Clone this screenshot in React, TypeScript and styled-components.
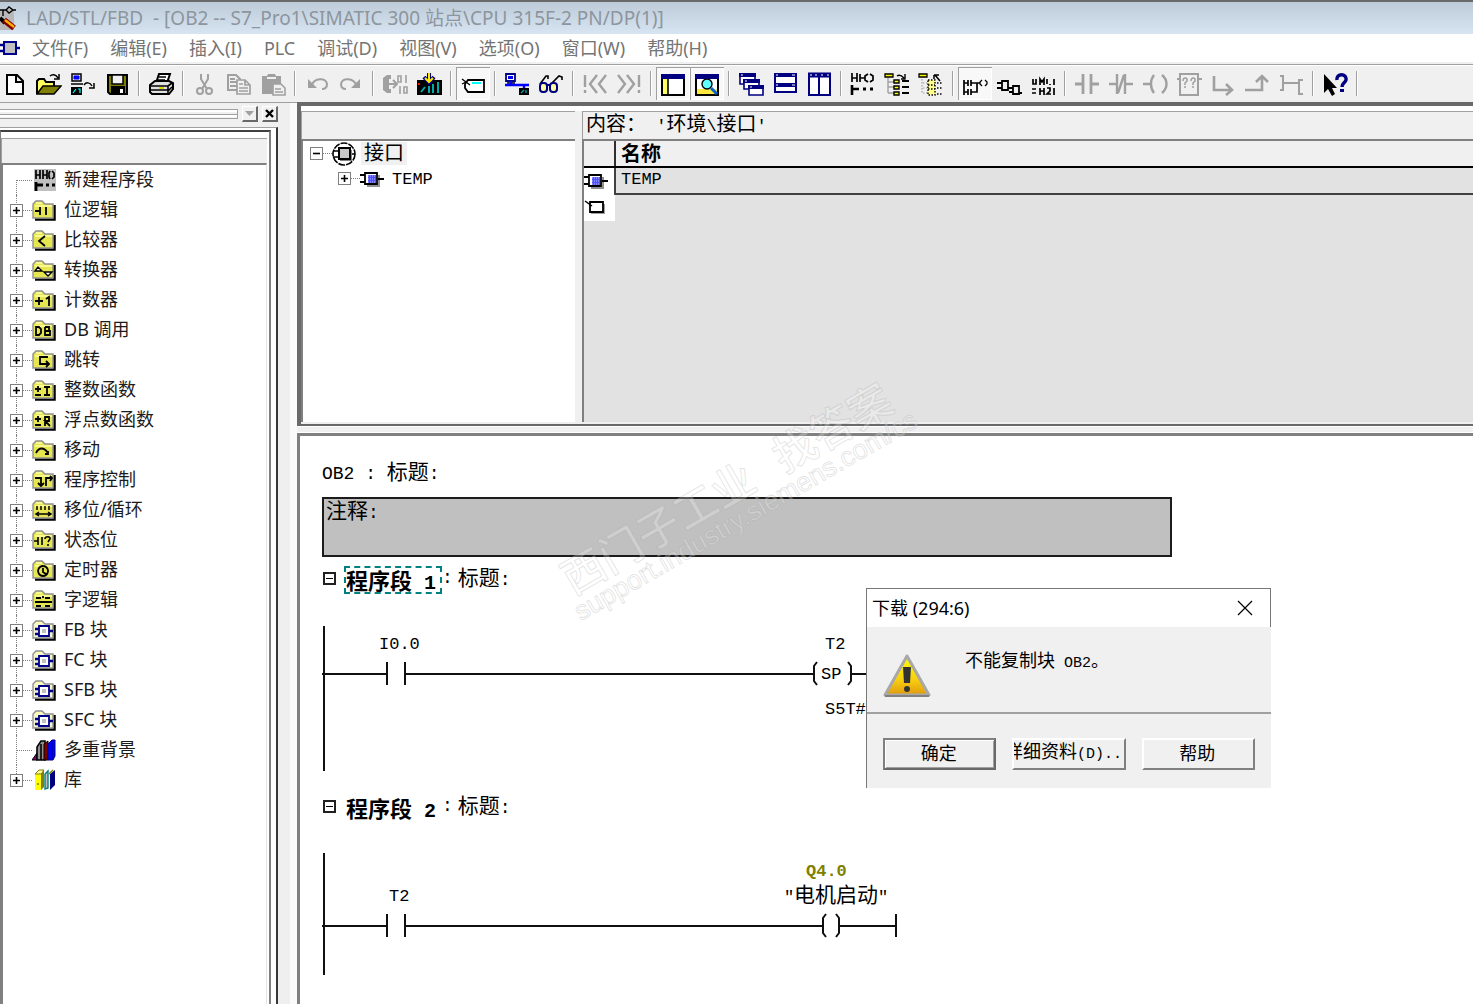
import React from "react";
import styled, { createGlobalStyle, css } from "styled-components";

const UI = '"Noto Sans", "Noto Sans CJK SC", sans-serif';
const MONO = '"Liberation Mono", "Noto Sans CJK SC", monospace';
const CJK = '"Noto Sans CJK SC", sans-serif';

const Global = createGlobalStyle`
  *, *::before, *::after { box-sizing: border-box; }
  body { margin: 0; background: #f0f0f0; color: #000; font-family: ${UI}; font-size: 18px; }
  button { font: inherit; color: inherit; border: 0; padding: 0; margin: 0; background: none; border-radius: 0; }
  svg { display: block; flex: none; }
`;

const Window = styled.div`
  display: flex;
  flex-direction: column;
  min-height: 100vh;
  position: relative;
  overflow: hidden;
`;

const TitleBar = styled.header`
  display: flex;
  align-items: center;
  gap: 10px;
  height: 34px;
  border-top: 2px solid #696969;
  background: linear-gradient(#bdcbd9, #d7e4f2);
  color: #8d959d;
  font-size: 19px;
  line-height: 28px;
  white-space: pre;
`;

const MenuBar = styled.nav`
  display: flex;
  align-items: center;
  gap: 22px;
  height: 28px;
  background: #fff;
  color: #747474;
  line-height: 28px;
`;

const MenuLead = styled.span`
  width: 20px;
  margin-right: -10px;
`;

const ToolBar = styled.div`
  display: flex;
  align-items: stretch;
  height: 38px;
  margin-top: 2px;
  padding: 2px 0;
  border-top: 1px solid #a0a0a0;
  box-shadow: inset 0 1px #fff;
  margin-left: -2px;
`;

const ToolButton = styled.button<{ $on?: boolean }>`
  display: flex;
  align-items: center;
  justify-content: center;
  flex: 0 0 34px;
  ${(p) =>
    p.$on &&
    css`
      background: #f8f8f8;
      box-shadow: inset 1px 1px #a0a0a0, inset -1px -1px #fff;
    `}
`;

const Divider = styled.span`
  flex: 0 0 10px;
  display: flex;
  justify-content: center;
  padding: 4px 0;
  &::before {
    content: "";
    width: 2px;
    background: #a0a0a0;
    border-right: 1px solid #fff;
  }
`;

const Body = styled.div`
  flex: 1;
  display: flex;
  align-items: stretch;
`;

const SideDock = styled.aside`
  flex: 0 0 278px;
  display: flex;
  flex-direction: column;
`;

const Gripper = styled.div`
  display: flex;
  align-items: center;
  gap: 4px;
  height: 25px;
  border-top: 1px solid #a0a0a0;
  padding-bottom: 2px;
`;

const GripLines = styled.span`
  flex: 1;
  height: 10px;
  margin-left: -4px;
  border: solid #a0a0a0;
  border-width: 1px 1px 1px 0;
  background: linear-gradient(#fff 2px, #f0f0f0 2px 4px, #a0a0a0 4px 5px, #fff 5px 7px, #f0f0f0 7px);
`;

const GripButton = styled.button`
  display: flex;
  align-items: center;
  justify-content: center;
  width: 16px;
  height: 16px;
  background: #f0f0f0;
  border: solid;
  border-width: 1px 2px 2px 1px;
  border-color: #fff #696969 #696969 #fff;
`;

const DockFrame = styled.div`
  flex: 1;
  display: flex;
  border-top: 1px solid #a0a0a0;
  border-right: 2px solid #383838;
  padding: 2px 5px 0 0;
  background: #fff;
`;

const DockInner = styled.div`
  flex: 1;
  display: flex;
  flex-direction: column;
  border: solid #808080;
  border-width: 2px 2px 0 1px;
  border-top-color: #404040;
  padding: 6px 2px 0 0;
`;

const DockHeader = styled.div`
  height: 25px;
  border: 1px solid #a0a0a0;
  border-width: 1px 0 0 1px;
  background: #f0f0f0;
`;

const Tree = styled.ul`
  flex: 1;
  margin: 0;
  padding: 0;
  list-style: none;
  background: #fff;
  border: solid #808080;
  border-width: 2px 0 0 2px;
`;

const SideTree = styled(Tree)`
  border-right: 1px solid #e3e3e3;
`;

const SideRow = styled.li`
  display: flex;
  align-items: center;
  height: 30px;
  color: #1c1c1c;
  line-height: 28px;
  white-space: pre;
`;

const Branch = styled.span<{ $first?: boolean; $last?: boolean }>`
  position: relative;
  flex: 0 0 29px;
  align-self: stretch;
  display: flex;
  align-items: center;
  padding-left: 7px;
  &::before {
    content: "";
    position: absolute;
    left: 13px;
    top: ${(p) => (p.$first ? 15 : 0)}px;
    bottom: ${(p) => (p.$last ? 15 : 0)}px;
    border-left: 1px dotted #808080;
  }
  &::after {
    content: "";
    position: absolute;
    left: 13px;
    right: 0;
    top: 15px;
    border-top: 1px dotted #808080;
  }
`;

const Toggle = styled.button`
  position: relative;
  z-index: 1;
  width: 13px;
  height: 13px;
  border: 1px solid #808080;
  background: #fff;
`;

const Label = styled.span`
  margin-left: 8px;
  padding-bottom: 2px;
`;

const Sash = styled.div`
  flex: 0 0 19px;
  background: linear-gradient(90deg, #efefef 12px, #fafafa 12px);
  border-top: 1px solid #a0a0a0;
`;

const Main = styled.main`
  flex: 1;
  min-width: 0;
  display: flex;
  flex-direction: column;
`;

const InterfacePane = styled.section`
  flex: 0 0 324px;
  display: flex;
  gap: 7px;
  border: solid #696969;
  border-width: 4px 0 2px 4px;
  padding-bottom: 2px;
  background: linear-gradient(#fff 5px, #f0f0f0 5px);
`;

const PaneColumn = styled.div<{ $grow?: boolean }>`
  flex: ${(p) => (p.$grow ? "1 1 0" : "0 0 274px")};
  min-width: 0;
  display: flex;
  flex-direction: column;
  padding-top: 5px;
`;

const PaneHeader = styled.div`
  height: 28px;
  border: solid #a0a0a0;
  border-width: 1px 0 0 1px;
  padding-left: 3px;
  background: #f0f0f0;
  line-height: 22px;
  white-space: pre;
`;

const PaneRow = styled.li<{ $child?: boolean }>`
  display: flex;
  align-items: center;
  height: 25px;
  padding-left: ${(p) => (p.$child ? 35 : 7)}px;
  line-height: 24px;
`;

const Dots = styled.span`
  width: 9px;
  border-top: 1px dotted #808080;
`;

const NodeText = styled.span<{ $selected?: boolean }>`
  margin-left: 5px;
  padding: 0 3px;
  height: 23px;
  line-height: 20px;
  background: ${(p) => (p.$selected ? "#f0f0f0" : "none")};
`;

const GridArea = styled.div`
  flex: 1;
  border: solid #808080;
  border-width: 2px 0 0 2px;
  background: #e2e2e2;
`;

const Grid = styled.table`
  width: 100%;
  border-collapse: collapse;
  table-layout: fixed;
  line-height: 22px;
  th, td { padding: 0 0 0 5px; height: 26px; text-align: left; }
  thead th { background: #f0f0f0; border-bottom: 2px solid #000; height: 26px; }
  thead th:first-child { width: 31px; border-right: 2px solid #303030; }
  tbody td:first-child { background: #fff; padding: 0; height: 27px; }
`;

const DataCell = styled.td`
  border-left: 2px solid #404040;
  border-bottom: 2px solid #404040;
  line-height: 18px;
  vertical-align: top;
`;

const HSash = styled.div`
  height: 7px;
  background: #f0f0f0;
  border: solid #fff;
  border-width: 1px 0;
`;

const Editor = styled.section`
  flex: 1;
  border: solid #808080;
  border-width: 3px 0 0 3px;
  background: #fff;
  padding: 22px 0 0 22px;
`;

const BlockTitle = styled.div`
  height: 28px;
  line-height: 24px;
  white-space: pre;
`;

const Comment = styled.div`
  max-width: 850px;
  height: 60px;
  margin: 11px 0 9px;
  padding: 0 2px;
  border: 2px solid #1c1c1c;
  background: #c0c0c0;
  line-height: 20px;
`;

const NetworkHead = styled.div`
  display: flex;
  align-items: center;
  height: 28px;
  line-height: 24px;
  white-space: pre;
`;

const Fold = styled.button`
  display: flex;
  align-items: center;
  justify-content: center;
  width: 13px;
  height: 13px;
  margin: 0 8px 4px 1px;
  border: 2px solid #202020;
  &::before { content: ""; width: 7px; height: 1px; background: #000; }
`;

const NetworkName = styled.strong<{ $selected?: boolean }>`
  height: 28px;
  padding-right: 4px;
  border: 2px dashed ${(p) => (p.$selected ? "#008080" : "transparent")};
  line-height: 22px;
`;

const NetworkTitle = styled.span`
  display: flex;
  gap: 5px;
  padding-bottom: 4px;
`;

const Run = styled.span<{ $size: number; $cjk?: boolean }>`
  font-family: ${(p) => (p.$cjk ? CJK : MONO)};
  font-size: ${(p) => p.$size}px;
  line-height: inherit;
`;

/* Fixed-pitch text: ideographs take a full cell, Latin characters half of one. */
const HALF: Record<number, number> = { 18: 15, 20: 17, 21: 18, 22: 20 };
function Fixed({ text, size = 20 }: { text: string; size?: 18 | 20 | 21 | 22 }) {
  const runs = text.match(/[\u3000-\u9fff\uff00-\uffef]+|[^\u3000-\u9fff\uff00-\uffef]+/g) || [];
  return (
    <span>
      {runs.map((r, i) => {
        const wide = r.charCodeAt(0) >= 0x3000;
        return (
          <Run key={i} $cjk={wide} $size={wide ? size : HALF[size]}>
            {r}
          </Run>
        );
      })}
    </span>
  );
}

const LadderText = styled.text<{ $cjk?: boolean; $bold?: boolean }>`
  font-family: ${(p) => (p.$cjk ? CJK : MONO)};
  font-size: ${(p) => (p.$cjk ? 21 : 17)}px;
  font-weight: ${(p) => (p.$bold ? 700 : 400)};
  fill: ${(p) => (p.$bold ? "#808000" : "#000")};
`;

const Watermark = styled.div`
  position: absolute;
  left: 553px;
  top: 561px;
  width: 440px;
  transform: rotate(-30deg);
  transform-origin: 0 0;
  color: rgba(255, 255, 255, 0.25);
  -webkit-text-stroke: 1px rgba(160, 160, 160, 0.28);
  white-space: pre;
  pointer-events: none;
`;

const MarkLarge = styled.div`
  font-family: ${CJK};
  font-size: 43px;
  font-weight: 500;
  line-height: 43px;
`;

const MarkSmall = styled.div`
  margin-left: -6px;
  font-family: "Liberation Sans", sans-serif;
  font-size: 27px;
  line-height: 28px;
`;

const Dialog = styled.section`
  position: absolute;
  left: 866px;
  top: 588px;
  width: 405px;
  background: #f0f0f0;
  border-left: 1px solid #777;
`;

const DialogTitle = styled.div`
  display: flex;
  align-items: center;
  justify-content: space-between;
  height: 39px;
  padding: 0 17px 0 5px;
  border: solid #777;
  border-width: 1px 1px 0 0;
  background: #fff;
  line-height: 36px;
`;

const DialogBody = styled.div`
  display: flex;
  height: 87px;
  padding: 18px 16px 0;
  gap: 34px;
  border-bottom: 2px solid #a0a0a0;
  line-height: 28px;
`;

const WarnBox = styled.span`
  padding-top: 9px;
`;

const DialogButtons = styled.div`
  display: flex;
  gap: 16px;
  padding: 24px 16px 18px;
`;

const PushButton = styled.button<{ $default?: boolean }>`
  display: flex;
  align-items: center;
  justify-content: center;
  flex: 1;
  min-width: 0;
  height: 32px;
  padding: 0 2px 4px 0;
  overflow: hidden;
  white-space: pre;
  line-height: 24px;
  border: 2px solid;
  border-color: #fff #808080 #808080 #fff;
  ${(p) =>
    p.$default &&
    css`
      border-color: #808080 #696969 #696969 #808080;
      box-shadow: inset 1px 1px #fff, inset -1px -1px #a0a0a0;
    `}
`;

/* ---------- icons ---------- */

const G = "#a0a0a0";
const N = "#000080";

function Icon({ children }: { children: React.ReactNode }) {
  return (
    <svg width="26" height="26" viewBox="0 0 26 26" fill="none" stroke="#000" strokeWidth="2" aria-hidden="true">
      {children}
    </svg>
  );
}

const icons: Record<string, React.ReactNode> = {
  new: <path d="M5 4h10l6 6v13H5zM14 4v7h7" fill="#fff" />,
  open: (
    <>
      <path d="M1 23V10l2-2h5l2 3h8v4" fill="#ffff60" />
      <path d="M1 23l6-8h18l-7 8z" fill="#808000" strokeWidth="1.5" />
      <path d="M14 5c2-2 6-2 8 2M23 3v5h-5" strokeWidth="1.5" />
    </>
  ),
  down: (
    <>
      <path d="M2 3h9v7H2z" fill="#e8e8e8" strokeWidth="1.5" />
      <path d="M4 5h5v3H4z" fill="#00f" stroke="#00f" strokeWidth="1" />
      <path d="M1 13h12" strokeWidth="1.5" />
      <path d="M1 16h11v8H1z" fill="#000" stroke="none" />
      <path d="M3 22l3-4M8 18h2v4" stroke="#0ff" strokeWidth="1.2" />
      <path d="M14 14c2-3 6-3 8 1M24 12v5h-5" strokeWidth="1.5" />
    </>
  ),
  save: (
    <>
      <path d="M4 4h19v19H6l-2-2z" fill="#808000" />
      <path d="M8 4h11v9H8z" fill="#f0f0f0" strokeWidth="1.5" />
      <path d="M8 16h12v7H8z" fill="#000" />
      <path d="M16 18h3v4h-3z" fill="#fff" stroke="none" />
    </>
  ),
  print: (
    <>
      <path d="M8 12l3-9h11l-3 9z" fill="#fff" />
      <path d="M11 6h7M10 9h7" strokeWidth="1.3" />
      <path d="M2 14l5-4h14l4 2v6l-4 5H4l-2-2z" fill="#e0e0e0" />
      <path d="M2 15h18v7M2 19h18M20 15l4-3M20 20l4-4" strokeWidth="1.6" />
      <path d="M11 17h5" stroke="#dcdc00" />
    </>
  ),
  cut: (
    <g stroke={G} strokeWidth="2">
      <path d="M9 3v5l6 10M16 3v5l-6 10" />
      <circle cx="8" cy="20" r="3" />
      <circle cx="17" cy="20" r="3" />
    </g>
  ),
  copy: (
    <g stroke={G} strokeWidth="2">
      <path d="M2 4h8l4 4v11H2zM4 8h5M4 11h7M4 15h7" />
      <path d="M11 9h8l5 5v9H11zM19 9v5h5M13 13h4M13 17h9M13 20h9" fill="#f0f0f0" strokeWidth="1.7" />
    </g>
  ),
  paste: (
    <>
      <path d="M2 5h5l1-2h7l1 2h5v18H2z" fill={G} stroke="none" />
      <path d="M7 7h9" stroke="#f0f0f0" />
      <path d="M13 13h8l4 4v7H13zM15 18h6M15 21h8" fill="#f0f0f0" stroke={G} strokeWidth="1.6" />
    </>
  ),
  undo: (
    <>
      <path d="M8 14c2-7 14-8 15-1 0 3-2 5-5 5" stroke={G} />
      <path d="M4 8v9h9z" fill={G} stroke="none" />
    </>
  ),
  redo: (
    <>
      <path d="M18 14C16 7 4 6 3 13c0 3 2 5 5 5" stroke={G} />
      <path d="M22 8v9h-9z" fill={G} stroke="none" />
    </>
  ),
  call: (
    <>
      <path d="M9 4H5L1 7v12l4 3h4v-4H7V8h2z" fill={G} stroke="none" />
      <g stroke={G}>
        <path d="M7 13h7M11 9l4 4-4 4" />
        <path d="M16 5h3v6h-3zM24 4v8M18 15v8M22 16h3v6h-3z" strokeWidth="1.6" />
      </g>
    </>
  ),
  module: (
    <>
      <path d="M1 9h25v15H1z" fill="#000" stroke="none" />
      <path d="M13 2v7M8 6l5 6 5-6" stroke={N} strokeWidth="4" />
      <path d="M13 2v8M9 7l4 4 4-4" stroke="#ffe800" />
      <path d="M3 12v2" stroke="#f00" />
      <path d="M5 21l4-5M13 15v7M17 13v9M22 11v11" stroke="#0aa" />
    </>
  ),
  tag: (
    <>
      <path d="M8 9h16v12H8l-3-4v-4z" fill="#fff" strokeWidth="1.8" />
      <path d="M2 8l8 6M2 13l4-2" strokeWidth="1.3" />
      <path d="M12 12h9" stroke="#0ff" />
    </>
  ),
  net: (
    <>
      <path d="M2 3h9v7H2z" fill="#fff" strokeWidth="1.8" stroke={N} />
      <path d="M4 5h5v3H4z" fill="#00f" stroke="none" />
      <path d="M3 12h8" strokeWidth="1.5" />
      <path d="M1 14h24M7 10v4M20 14v4" stroke="#00f" strokeWidth="2.4" />
      <path d="M15 17h10v7H15z" fill="#000" stroke="none" />
      <path d="M17 22l3-3M22 19v3" stroke="#0aa" strokeWidth="1.3" />
    </>
  ),
  glasses: (
    <g strokeWidth="2">
      <path d="M2 13l6-8h2v3M14 12l7-7 3 1v3" strokeWidth="1.6" />
      <rect x="2" y="12" width="7" height="9" rx="3" fill="#ffffa0" stroke={N} />
      <rect x="12" y="12" width="7" height="9" rx="3" fill="#ffffa0" stroke={N} />
      <path d="M9 14h3" stroke={N} />
    </g>
  ),
  prev: <path d="M3 4v12M3 19v3M15 4l-7 9 7 9M24 4l-7 9 7 9" stroke={G} strokeWidth="2.4" />,
  next: <path d="M23 4v12M23 19v3M2 4l7 9-7 9M11 4l7 9-7 9" stroke={G} strokeWidth="2.4" />,
  pane: (
    <>
      <path d="M2 4h22v20H2z" fill="#fff" />
      <path d="M1 3h24v5H1z" fill={N} stroke="none" />
      <path d="M3 8h4v15H3z" fill="#ffff60" stroke="none" />
      <path d="M8 8v16" strokeWidth="1.6" />
    </>
  ),
  detail: (
    <>
      <path d="M2 4h22v20H2z" fill="#fff" />
      <path d="M1 3h24v5H1z" fill={N} stroke="none" />
      <path d="M3 18h20v5H3z" fill="#ffe840" stroke="none" />
      <circle cx="13" cy="13" r="5" fill="#60ffff" strokeWidth="1.4" />
      <path d="M17 17l6 6" stroke="#0060d0" strokeWidth="3" />
    </>
  ),
  cascade: (
    <g fill="#fff" stroke={N} strokeWidth="1.6">
      <path d="M2 3h15v10H2z" /><path d="M1 4h17" strokeWidth="4" />
      <path d="M6 9h15v9H6z" /><path d="M5 10h17" strokeWidth="4" />
      <path d="M11 15h14v9H11z" /><path d="M10 16h16" strokeWidth="4" />
      <path d="M3 4h2M7 10h2M12 16h2" stroke="#fff" strokeWidth="1" />
    </g>
  ),
  rows: (
    <g fill="#fff" stroke={N} strokeWidth="2">
      <path d="M3 3h21v18H3z" /><path d="M2 4h23M2 14h23" strokeWidth="4" />
      <path d="M4 4h2M4 14h2M20 4h3M20 14h3" stroke="#fff" strokeWidth="1" />
    </g>
  ),
  cols: (
    <g fill="#fff" stroke={N} strokeWidth="2">
      <path d="M3 3h21v21H3zM13 3v21" /><path d="M2 4h23" strokeWidth="5" />
      <path d="M4 4h2M9 4h2M15 4h2M21 4h2" stroke="#fff" strokeWidth="1" />
    </g>
  ),
  network: (
    <g strokeWidth="1.7">
      <path d="M2 2v9M2 7h5M7 2v9M10 3v8M10 7h5M18 3l-3 2v4l3 2M20 3l3 2v4l-3 2" />
      <path d="M2 14v10M2 18h7" strokeWidth="2.6" />
      <path d="M13 18h3M20 18h3" strokeWidth="3" />
    </g>
  ),
  treeOn: (
    <>
      <path d="M1 3h8v3H1z" fill="#ff0" strokeWidth="1.3" />
      <path d="M13 5c3-2 5 0 7 2M21 3v5h-4" strokeWidth="1.4" />
      <path d="M4 7v15M4 11h6M4 16h6M4 22h6" stroke={G} strokeWidth="1.4" />
      <path d="M10 9h5v3h-5zM10 15h5v3h-5zM10 21h5v3h-5z" fill="#ff0" strokeWidth="1.4" />
      <path d="M18 10h7M18 16h7M18 22h7" strokeWidth="1.8" />
    </>
  ),
  treeOff: (
    <>
      <path d="M1 3h8v3H1z" fill="#ff0" strokeWidth="1.3" />
      <path d="M16 4h5M17 4l5 6M16 4v4" strokeWidth="1.5" />
      <path d="M4 8v15M5 12h6M5 17h6M5 22h6" stroke={G} strokeWidth="1.2" strokeDasharray="1.5 1.5" />
      <path d="M10 9h7v15h-7z" fill="#ffff90" strokeWidth="1.4" strokeDasharray="1.5 1.5" />
      <path d="M10 14h7M10 18h7M19 12h6M19 17h6M19 23h6" strokeWidth="1.3" strokeDasharray="1.5 1.5" />
    </>
  ),
  lad: (
    <g strokeWidth="1.7">
      <path d="M2 9v15M6 9v6M9 9v6M2 12h4M9 12h9M6 18v6M9 18v6M2 21h4M9 21h6v-9" />
      <path d="M20 9l-2 2v2l2 2M23 9l2 2v2l-2 2" strokeWidth="1.3" />
    </g>
  ),
  fbd: <path d="M6 10h6v9H6zM17 15h6v8h-6zM1 12h5M1 17h5M12 17h5M13 21h4M23 22h3" strokeWidth="1.8" />,
  stl: (
    <path
      d="M3 8v5h3V8M10 14V8l2 3 2-3v6M17 8v5M20 13v1M24 8v6M2 18h4M2 22h4M10 24v-7M14 24v-7M10 20h4M17 17h3v3l-3 3h4M24 17v7"
      strokeWidth="1.7"
    />
  ),
  no: <path d="M1 13h8M9 3v20M17 3v20M17 13h8" stroke={G} strokeWidth="2.8" />,
  nc: <path d="M1 13h8M9 3v20M17 3v20M17 13h8M10 22l6-18" stroke={G} strokeWidth="2.4" />,
  coil: <path d="M1 13h8M12 4c-4 5-4 13 0 18M20 4c6 5 6 13 0 18" stroke={G} strokeWidth="2.4" />,
  box: (
    <>
      <path d="M4 3h18v21H4zM1 8h3M22 8h4" stroke={G} strokeWidth="2" />
      <path d="M7 10c0-4 5-4 4 0l-2 2v2M9 15v2M15 10c0-4 5-4 4 0l-2 2v2M17 15v2" stroke={G} strokeWidth="1.5" />
    </>
  ),
  branch: <path d="M4 5v14h18M16 13l6 6-6 5" stroke={G} strokeWidth="2.6" />,
  join: <path d="M1 19h17V6M12 11l6-6 6 6" stroke={G} strokeWidth="2.6" />,
  rung: <path d="M2 5h3v14H2M5 12h16M25 9h-4v14h4" stroke={G} strokeWidth="2" />,
  help: (
    <>
      <path d="M2 3v19l4-4 4 7 3-2-3-6h5z" fill="#000" stroke="none" />
      <path d="M15 9c-1-7 10-7 9 0-1 3-4 3-4 7" stroke={N} strokeWidth="3.4" />
      <path d="M18 18h4v3h-4z" fill={N} stroke="none" />
    </>
  ),
};

type Tool = [string, string, boolean?];
const toolGroups: Tool[][] = [
  [["new", "新建"], ["open", "打开"], ["down", "下载到站点"], ["save", "保存"]],
  [["print", "打印"]],
  [["cut", "剪切"], ["copy", "复制"], ["paste", "粘贴"]],
  [["undo", "撤消"], ["redo", "恢复"]],
  [["call", "更新调用"], ["module", "下载"]],
  [["tag", "符号", true]],
  [["net", "在线"], ["glasses", "监视"]],
  [["prev", "上一个错误"], ["next", "下一个错误"]],
  [["pane", "总览", true], ["detail", "详细信息", true]],
  [["cascade", "层叠"], ["rows", "横向平铺"], ["cols", "纵向平铺"]],
  [["network", "新建程序段"], ["treeOn", "展开"], ["treeOff", "折叠"]],
  [["lad", "LAD", true], ["fbd", "FBD"], ["stl", "STL"]],
  [["no", "常开触点"], ["nc", "常闭触点"], ["coil", "线圈"], ["box", "空框"], ["branch", "打开分支"], ["join", "关闭分支"], ["rung", "连接"]],
  [["help", "帮助"]],
];

function Folder({ block, children }: { block?: boolean; children?: React.ReactNode }) {
  return (
    <svg width="24" height="22" viewBox="0 0 24 22" fill="none" aria-hidden="true">
      <path d="M3 20.5h19.5V6" stroke="#000" strokeWidth="2.5" />
      <path d="M1 19V5l3-3h6l3 3h8v14z" fill={block ? "#f4f4d0" : "#e6e650"} stroke="#909090" strokeWidth="1.4" />
      <path d="M4 4h6M3 7h17" stroke="#ffffa8" strokeWidth="1.4" />
      <g stroke="#000" strokeWidth="1.8">{children}</g>
    </svg>
  );
}

const blockGlyph = (
  <g stroke="#00008b">
    <path d="M3 10h4M3 15h4M17 12h4" strokeWidth="2.6" />
    <path d="M7 7h10v10H7z" fill="#fff" />
    <path d="M10 10h4v4h-4z" fill="#c0c0c0" stroke="none" />
  </g>
);

const folderGlyphs: Record<string, React.ReactNode> = {
  bit: <path d="M3 12h5M8 8v8M14 8v8" />,
  cmp: <path d="M13 7l-6 5 6 5" />,
  conv: <path d="M3 12l3-4 4 4zM12 13h8l-4 4z" strokeWidth="1.4" fill="#fff" />,
  cnt: <path d="M3 12h8M7 8v8M14 10l3-2v9" />,
  db: <path d="M4 8v8h3l2-2v-4L7 8zM13 8v8h5v-4h-5M13 8h4v4" />,
  jump: <path d="M16 8H8v7h9M14 12l3 3-3 3" />,
  int: <path d="M3 10h6M6 7v6M3 16h6M12 8h6M15 8v8M12 16h6" />,
  real: <path d="M3 10h6M6 7v6M3 16h6M13 17V8h4v4h-4l5 5" />,
  move: <path d="M4 14c3-6 8-6 12 0M16 12v3h-3" />,
  prog: <path d="M3 9h6v7M6 14l3 3 3-3M14 17V9h6M18 7l2 2-2 3" />,
  shift: <path d="M5 7v4M9 7v4M13 7v4M17 7v4M4 15h15M7 13l-3 2 3 2M16 13l3 2-3 2" strokeWidth="1.5" />,
  status: <path d="M2 12h4M6 8v8M10 8v8M13 10c0-3 6-3 5 0l-2 3M16 15v2" strokeWidth="1.6" />,
  timer: <path d="M11 7a5 5 0 1 0 .1 0M11 9v4l3 2" />,
  word: <path d="M4 9h5M13 9h5M3 13h17M4 17h5M13 17h5M11 7v2" />,
};

const NewNetworkIcon = (
  <svg width="24" height="22" viewBox="0 0 24 22" fill="none" stroke="#000" strokeWidth="1.7" aria-hidden="true">
    <path d="M2 0h22v22H2z" fill="#c0c0c0" stroke="none" />
    <path d="M4 1v9M4 6h4M8 1v9M11 1v9M11 6h4M15 1v9M18 2l-1 2v4l1 2M20 2l2 2v4l-2 2" />
    <path d="M4 13v9M4 16h7M14 16h3M20 16h3" strokeWidth="2.8" />
  </svg>
);

const BooksIcon = (
  <svg width="24" height="22" viewBox="0 0 24 22" aria-hidden="true">
    <path d="M0 21l5-7v7z" fill="#800080" stroke="#000" />
    <path d="M5 21V8l4-6h4v19z" fill="#909090" stroke="#000" strokeWidth="1.6" />
    <path d="M9 21V5" stroke="#000" strokeWidth="1.6" />
    <path d="M12 21V5l4-3v19z" fill="#800000" stroke="#000" />
    <path d="M16 21V5l4-4h3v16l-2 4z" fill="#00f" stroke="#000080" />
    <path d="M20 21V4" stroke="#000080" />
  </svg>
);

const LibraryIcon = (
  <svg width="24" height="22" viewBox="0 0 24 22" aria-hidden="true">
    <path d="M3 21V5h6v16z" fill="#ff0" />
    <path d="M9 21V5l3-4v17z" fill="#808000" />
    <path d="M3 5l4-4h5L9 5z" fill="#ffffa0" stroke="#808000" />
    <path d="M13 20V5l3-3v17z" fill="#c0c0c0" stroke="#008080" strokeWidth="1.4" />
    <path d="M18 21V5l5-4v15z" fill="#000080" />
    <path d="M17 5l4-4M5 15h2" stroke="#808000" strokeWidth="1.4" />
  </svg>
);

const sideItems: [string, string][] = [
  ["newnet", "新建程序段"], ["bit", "位逻辑"], ["cmp", "比较器"], ["conv", "转换器"], ["cnt", "计数器"],
  ["db", "DB 调用"], ["jump", "跳转"], ["int", "整数函数"], ["real", "浮点数函数"], ["move", "移动"],
  ["prog", "程序控制"], ["shift", "移位/循环"], ["status", "状态位"], ["timer", "定时器"], ["word", "字逻辑"],
  ["block", "FB 块"], ["block", "FC 块"], ["block", "SFB 块"], ["block", "SFC 块"], ["books", "多重背景"], ["lib", "库"],
];

function sideIcon(kind: string) {
  if (kind === "newnet") return NewNetworkIcon;
  if (kind === "books") return BooksIcon;
  if (kind === "lib") return LibraryIcon;
  if (kind === "block") return <Folder block>{blockGlyph}</Folder>;
  return <Folder>{folderGlyphs[kind]}</Folder>;
}

function Expander({ open, name }: { open?: boolean; name: string }) {
  return (
    <Toggle aria-label={name} aria-expanded={!!open}>
      <svg width="11" height="11" viewBox="0 0 11 11" stroke="#000" strokeWidth="1.6" aria-hidden="true">
        <path d={open ? "M2 5.5h7" : "M2 5.5h7M5.5 2v7"} />
      </svg>
    </Toggle>
  );
}

function VarIcon() {
  return (
    <svg width="24" height="18" viewBox="0 0 24 18" fill="none" stroke="#000" strokeWidth="1.8" aria-hidden="true">
      <path d="M7 16h12V5" stroke="#909090" strokeWidth="2" />
      <path d="M0 5h6M0 12h6M18 9h6" />
      <path d="M5 3h12v11H5z" fill="#fff" />
      <path d="M8 5h8v8H8z" fill="#5050ff" stroke="none" />
      <path d="M8 6h8M8 9h8M8 12h8" stroke="#b8b8ff" strokeWidth="1" strokeDasharray="1 1" />
    </svg>
  );
}

function RootIcon() {
  return (
    <svg width="24" height="24" viewBox="0 0 24 24" fill="none" stroke="#000" aria-hidden="true">
      <circle cx="12" cy="12" r="11" strokeWidth="1.6" strokeDasharray="7 1" />
      <path d="M1 9h6M1 15h6M17 12h6" strokeWidth="1.6" />
      <path d="M19 8v10H8" stroke="#808080" strokeWidth="2" />
      <path d="M7 6h11v11H7z" fill="#c8c8c8" strokeWidth="2" />
    </svg>
  );
}

function TagIcon() {
  return (
    <svg width="24" height="18" viewBox="0 0 24 18" fill="none" stroke="#000" aria-hidden="true">
      <path d="M7 14h13V5" stroke="#a0a0a0" strokeWidth="2" />
      <path d="M6 3h13v10H6z" fill="#fff" strokeWidth="1.8" />
      <path d="M1 2l7 5" strokeWidth="1.5" />
    </svg>
  );
}

function WarningIcon() {
  return (
    <svg width="48" height="44" viewBox="0 0 48 44" aria-hidden="true">
      <defs>
        <linearGradient id="warn" x1="0" y1="0" x2="0" y2="1">
          <stop offset="0" stopColor="#ffff00" />
          <stop offset="0.6" stopColor="#f8cf10" />
          <stop offset="1" stopColor="#e09a10" />
        </linearGradient>
      </defs>
      <path d="M24 2L46 41H2z" fill="url(#warn)" stroke="#a8a8a8" strokeWidth="3" strokeLinejoin="round" />
      <path d="M2 42h44" stroke="#808080" strokeWidth="2" />
      <path d="M20 13h8l-1 16h-6z" fill="#333" />
      <circle cx="24" cy="35" r="3" fill="#333" />
    </svg>
  );
}

function NetworkOne() {
  return (
    <svg width="600" height="200" viewBox="0 0 600 200" fill="none" stroke="#101010" strokeWidth="2">
      <path d="M2 32v145M0 80h65M65 68v23M83 68v23M83 80h408M530 80h44M574 68v23" />
      <path d="M495 68l-3 4v15l3 4M526 68l3 4v15l-3 4" />
      <g stroke="none">
        <LadderText x="57" y="55">I0.0</LadderText>
        <LadderText x="503" y="55">T2</LadderText>
        <LadderText x="499" y="85">SP</LadderText>
        <LadderText x="503" y="120">S5T#</LadderText>
      </g>
    </svg>
  );
}

function NetworkTwo() {
  return (
    <svg width="600" height="160" viewBox="0 0 600 160" fill="none" stroke="#101010" strokeWidth="2">
      <path d="M2 31v122M0 104h65M65 92v23M83 92v23M83 104h417M518 104h56M574 92v23" />
      <path d="M504 92l-3 4v15l3 4M514 92l3 4v15l-3 4" />
      <g stroke="none">
        <LadderText x="67" y="79">T2</LadderText>
        <LadderText x="484" y="54" $bold>Q4.0</LadderText>
        <LadderText x="462" y="80">"</LadderText>
        <LadderText x="472" y="80" $cjk>电机启动</LadderText>
        <LadderText x="556" y="80">"</LadderText>
      </g>
    </svg>
  );
}

export default function App() {
  return (
    <Window>
      <Global />
      <TitleBar>
        <svg width="16" height="26" viewBox="0 0 16 26" fill="none" aria-hidden="true">
          <path d="M0 4h14v21H0z" fill="#b8b8b8" />
          <path d="M0 5h7M3 5v6M6 5l3-3 4 3-4 3zM13 5h3" stroke="#000" strokeWidth="1.4" />
          <path d="M0 13l5 5" stroke="#000" strokeWidth="4" />
          <path d="M4 15l10 8" stroke="#800000" strokeWidth="6" />
          <path d="M5 15l9 7" stroke="#ffb000" strokeWidth="2.4" />
        </svg>
        <span>{"LAD/STL/FBD  - [OB2 -- S7_Pro1\\SIMATIC 300 站点\\CPU 315F-2 PN/DP(1)]"}</span>
      </TitleBar>
      <MenuBar>
        <MenuLead>
          <svg width="20" height="16" viewBox="0 0 20 16" fill="none" stroke="#00008b" strokeWidth="2.4" aria-hidden="true">
            <path d="M0 5h4M0 11h4M16 8h4" />
            <path d="M4 2h12v12H4z" fill="#c0c0c0" strokeWidth="2" />
          </svg>
        </MenuLead>
        {["文件(F)", "编辑(E)", "插入(I)", "PLC", "调试(D)", "视图(V)", "选项(O)", "窗口(W)", "帮助(H)"].map((m) => (
          <button key={m}>{m}</button>
        ))}
      </MenuBar>
      <ToolBar role="toolbar">
        {toolGroups.map((group, i) => (
          <React.Fragment key={i}>
            {group.map(([id, name, on]) => (
              <ToolButton key={id} $on={on} aria-label={name} aria-pressed={on}>
                <Icon>{icons[id]}</Icon>
              </ToolButton>
            ))}
            <Divider />
          </React.Fragment>
        ))}
      </ToolBar>
      <Body>
        <SideDock>
          <Gripper>
            <GripLines />
            <GripButton aria-label="菜单">
              <svg width="9" height="5" viewBox="0 0 9 5" aria-hidden="true"><path d="M0 0h9L4.500 5z" fill="#a0a0a0" /></svg>
            </GripButton>
            <GripButton aria-label="关闭">
              <svg width="9" height="9" viewBox="0 0 9 9" aria-hidden="true"><path d="M1 1l7 7M8 1L1 8" stroke="#000" strokeWidth="2.4" /></svg>
            </GripButton>
          </Gripper>
          <DockFrame>
            <DockInner>
              <DockHeader />
              <SideTree>
                {sideItems.map(([kind, name], i) => (
                  <SideRow key={name}>
                    <Branch $first={i === 0} $last={i === sideItems.length - 1}>
                      {kind !== "newnet" && kind !== "books" && <Expander name={name} />}
                    </Branch>
                    {sideIcon(kind)}
                    <Label>{name}</Label>
                  </SideRow>
                ))}
              </SideTree>
            </DockInner>
          </DockFrame>
        </SideDock>
        <Sash />
        <Main>
          <InterfacePane>
            <PaneColumn>
              <PaneHeader />
              <Tree>
                <PaneRow>
                  <Expander open name="接口" />
                  <Dots />
                  <RootIcon />
                  <NodeText $selected><Fixed text="接口" /></NodeText>
                </PaneRow>
                <PaneRow $child>
                  <Expander name="TEMP" />
                  <Dots />
                  <VarIcon />
                  <NodeText><Fixed text="TEMP" /></NodeText>
                </PaneRow>
              </Tree>
            </PaneColumn>
            <PaneColumn $grow>
              <PaneHeader><Fixed text={"内容： '环境\\接口'"} /></PaneHeader>
              <GridArea>
                <Grid>
                  <thead>
                    <tr><th /><th><Fixed text="名称" /></th></tr>
                  </thead>
                  <tbody>
                    <tr><td><VarIcon /></td><DataCell><Fixed text="TEMP" /></DataCell></tr>
                    <tr><td><TagIcon /></td><td /></tr>
                  </tbody>
                </Grid>
              </GridArea>
            </PaneColumn>
          </InterfacePane>
          <HSash />
          <Editor>
            <BlockTitle><Fixed size={21} text="OB2 : 标题:" /></BlockTitle>
            <Comment><Fixed size={21} text="注释:" /></Comment>
            <NetworkHead>
              <Fold aria-label="程序段 1" />
              <NetworkName $selected><Fixed size={22} text="程序段 1" /></NetworkName>
              <NetworkTitle><Fixed size={21} text=":" /><Fixed size={21} text="标题:" /></NetworkTitle>
            </NetworkHead>
            <NetworkOne />
            <NetworkHead>
              <Fold aria-label="程序段 2" />
              <NetworkName><Fixed size={22} text="程序段 2" /></NetworkName>
              <NetworkTitle><Fixed size={21} text=":" /><Fixed size={21} text="标题:" /></NetworkTitle>
            </NetworkHead>
            <NetworkTwo />
          </Editor>
        </Main>
      </Body>
      <Watermark aria-hidden="true">
        <MarkLarge>西门子工业   找答案</MarkLarge>
        <MarkSmall>support.industry.siemens.com/cs</MarkSmall>
      </Watermark>
      <Dialog role="dialog" aria-label="下载 (294:6)">
        <DialogTitle>
          <span>下载 (294:6)</span>
          <button aria-label="关闭">
            <svg width="16" height="16" viewBox="0 0 16 16" stroke="#000" strokeWidth="1.2" aria-hidden="true"><path d="M1 1l14 14M15 1L1 15" /></svg>
          </button>
        </DialogTitle>
        <DialogBody>
          <WarnBox><WarningIcon /></WarnBox>
          <span><Fixed size={18} text="不能复制块 OB2。" /></span>
        </DialogBody>
        <DialogButtons>
          <PushButton $default><Fixed size={18} text="确定" /></PushButton>
          <PushButton><Fixed size={18} text="详细资料(D)..." /></PushButton>
          <PushButton><Fixed size={18} text="帮助" /></PushButton>
        </DialogButtons>
      </Dialog>
    </Window>
  );
}
